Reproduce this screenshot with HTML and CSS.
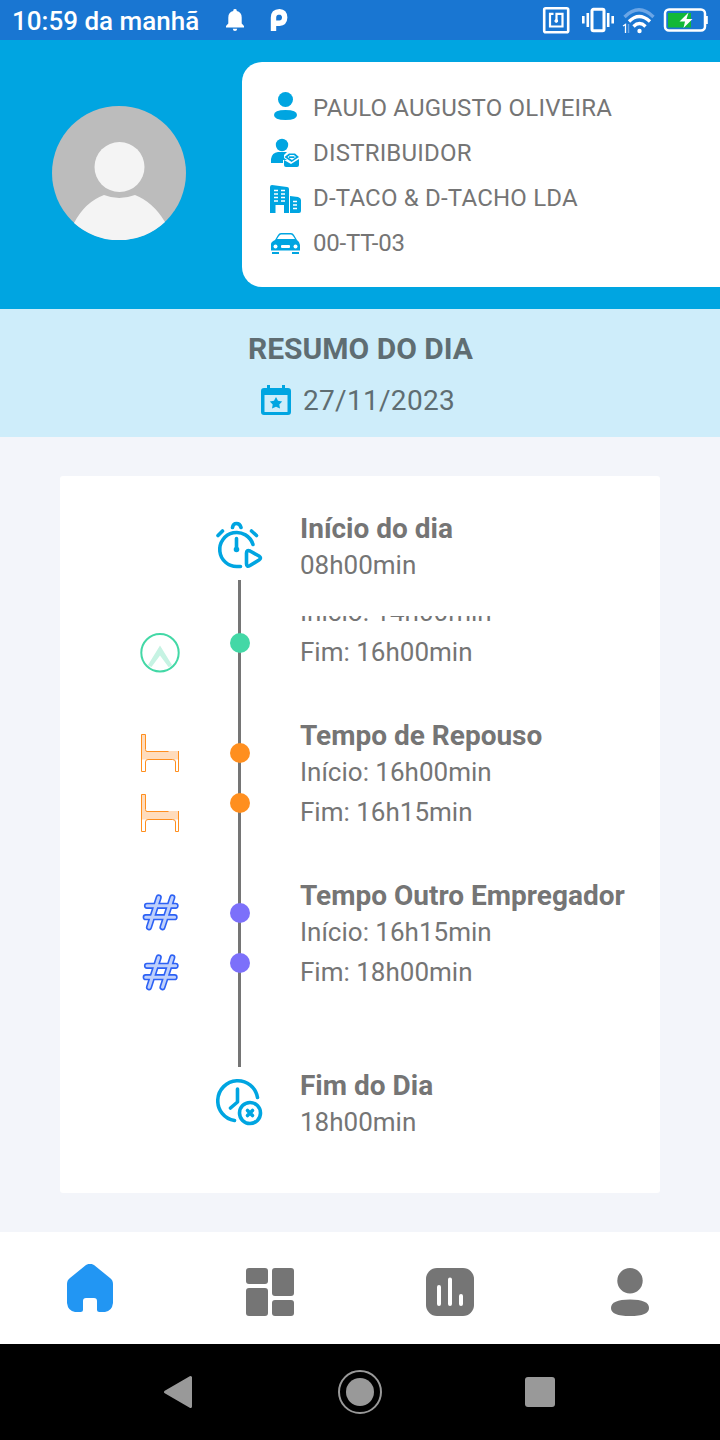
FILE: index.html
```
<!DOCTYPE html>
<html lang="pt">
<head>
  <meta charset="UTF-8">
  <title>Resumo do dia</title>
  <meta name="viewport" content="width=720, initial-scale=1.0">
  <link rel="stylesheet" href="styles.css">
</head>
<body>
  <svg width="0" height="0" class="defs">
    <symbol id="bed" viewBox="0 0 40 40">
      <path d="M1 1.500H5V18H38.500V26.500H1Z" fill="#ffdcbc"/>
      <path d="M28.500 18.500H7Q5.500 18.500 5.500 16.500V1.500H1.500V38.500H5.500V29Q5.500 26.500 8 26.500H32.500Q35.500 26.500 35.500 29V38.500H38.500V18" fill="none" stroke="#ff8f1f"/>
    </symbol>
    <symbol id="hash" viewBox="0 0 40 40">
      <g fill="none" stroke-linecap="round" stroke-linejoin="round">
        <path d="M18.700 4.500L9 34.200M32.300 4.500L22.500 34.200M7 12.800H35.600M5.700 24.200H34.600" stroke="#2d62f5" stroke-width="6.200"/>
        <path d="M18.700 4.500L9 34.200M32.300 4.500L22.500 34.200M7 12.800H35.600M5.700 24.200H34.600" stroke="#bfd0fb" stroke-width="3"/>
      </g>
    </symbol>
  </svg>

  <div class="status-bar">
    <span class="clock">10:59 da manhã</span>
    <svg class="bell" width="20" height="24" viewBox="0 0 20 24" fill="#fff">
      <path d="M1 19.500V18L3.300 15.500V9.500Q3.300 4.200 8.300 3V2.200Q8.300 1 10 1Q11.700 1 11.700 2.200V3Q16.700 4.200 16.700 9.500V15.500L19 18V19.500ZM7.800 20.800H12.200Q12 23 10 23Q8 23 7.800 20.800Z"/>
    </svg>
    <svg class="app-mark" width="20" height="24" viewBox="0 0 20 24">
      <path d="M4.500 23V9.500Q4.500 4 10.500 3.700Q15.500 4 15.700 9.500Q15.500 15 10.500 15.200H6" fill="none" stroke="#fff" stroke-width="5.400"/>
    </svg>
    <div class="status-right">
      <svg class="nfc" width="28" height="28" viewBox="0 0 28 28" fill="none" stroke="#fff" stroke-width="2.600">
        <rect x="2.200" y="2.200" width="24" height="24" rx="1.500"/>
        <path d="M11.500 7.800H8V20.500H20.500V7.800H14.500V14" stroke-width="2.200"/>
        <circle cx="14.300" cy="15" r="1.400" fill="#fff" stroke-width="1"/>
      </svg>
      <svg width="34" height="28" viewBox="0 0 34 28" fill="none" stroke="#fff" stroke-width="2.600">
        <rect x="11" y="3.300" width="12" height="21.500" rx="1.500" stroke-width="3"/>
        <path d="M6.800 7V21M2.300 10V17.500M27.200 7V21M31.700 10V17.500"/>
      </svg>
      <svg width="34" height="28" viewBox="0 0 34 28" fill="none" stroke="#fff" stroke-width="3.300">
        <path d="M2.500 11Q17 -3.500 31.500 11" stroke="#6ba6e6"/>
        <path d="M7 15.500Q17 5.500 28 15.500M11.500 20.500Q17.500 14.500 23.500 20.500"/>
        <circle cx="17.500" cy="25" r="2.200" fill="#fff" stroke="none"/>
        <path d="M1 20L3.500 18.500V27" stroke-width="1.300"/><path d="M6.500 18V27" stroke="#6ba6e6" stroke-width="1.500"/>
      </svg>
      <svg width="46" height="26" viewBox="0 0 46 26">
        <rect x="2" y="2.500" width="40" height="21" rx="4" fill="none" stroke="#fff" stroke-width="2.500"/>
        <rect x="42.500" y="9" width="2.300" height="8" fill="#fff"/>
        <rect x="5" y="6" width="23" height="14.500" fill="#12b838"/>
        <path d="M25.500 5.500L16.500 14.500H22L20.500 21L29.500 12H23.500Z" fill="#fff"/>
      </svg>
    </div>
  </div>

  <header class="profile">
    <svg class="avatar" width="134" height="134" viewBox="0 0 134 134">
      <circle cx="67" cy="67" r="67" fill="#bcbcbc"/>
      <circle cx="67.500" cy="61" r="25" fill="#f4f4f4"/>
      <path d="M22 117Q33 96 52 89Q67 95 83 89Q101 96 113 116A67 67 0 0 1 22 117Z" fill="#f4f4f4"/>
    </svg>
    <div class="profile-card">
      <div class="profile-row">
        <svg width="32" height="32" viewBox="0 0 32 32" fill="#00a5e1"><circle cx="15.500" cy="7.500" r="7.500"/><path d="M4 23Q4 18 15.500 18Q27 18 27 23Q27 28 15.500 28Q4 28 4 23Z"/></svg>
        <span>PAULO AUGUSTO OLIVEIRA</span>
      </div>
      <div class="profile-row">
        <svg width="32" height="30" viewBox="0 0 32 30" fill="#00a5e1"><circle cx="12" cy="7" r="6.200"/><path d="M1 25V21Q2 14.500 8 14H17L14 17V20L17 22H13V25ZM14 22L21 26L29 21V27Q29 29 27 29H16Q14 29 14 27ZM14.500 19L19 15.500H25L29 19L21.500 24Z"/><path d="M17.500 19L20 17H24L26 19L22 22Z" fill="#fff"/><path d="M19 18.300H24.500V20H19Z"/></svg>
        <span>DISTRIBUIDOR</span>
      </div>
      <div class="profile-row">
        <svg width="32" height="30" viewBox="0 0 32 30"><g transform="translate(0 2)"><path d="M0 2Q0 0 2 0L17 2Q19 2 19 4V28H14V20H5.500V28H0ZM20 11L28 12Q31 13 31 15V26Q31 28 29 28H20Z" fill="#00a5e1"/><path d="M4 5.500H8M11 5.500H15M4 9H8M11 9H15M4 12.500H8M11 12.500H15M4 16H8M11 16H15M23 16.500H27M23 20H27M23 23.500H27" stroke="#fff" stroke-width="1.500"/></g></svg>
        <span>D-TACO &amp; D-TACHO LDA</span>
      </div>
      <div class="profile-row">
        <svg width="32" height="30" viewBox="0 0 32 30"><path d="M1 22.500V16Q1 14 5 12L8 7Q9 5 11 5H21Q23 5 24 7L27 12Q30 14 30 17V22.500ZM2 24H9V26H2ZM22 24H29V26H22Z" fill="#00a5e1"/><path d="M7 11L9 8Q10 6.500 11 6.500H21Q22 6.500 23 8L25 11Z" fill="#fff"/><circle cx="5.500" cy="18.500" r="2" fill="#fff"/><circle cx="25.500" cy="18.500" r="2" fill="#fff"/><rect x="11" y="17" width="9" height="3" rx="1" fill="#fff"/></svg>
        <span class="plate">00-TT-03</span>
      </div>
    </div>
  </header>

  <section class="summary">
    <h1>RESUMO DO DIA</h1>
    <div class="summary-date">
      <svg width="30" height="30" viewBox="0 0 30 30"><path d="M3 3H6V0H9V3H21V0H24V3H27Q30 3 30 6V27Q30 30 27 30H3Q0 30 0 27V6Q0 3 3 3ZM3.500 10V27H26.500V10Z" fill="#00a5e1" fill-rule="evenodd"/><path d="M15 12L17 15.800L21.200 16.500L18.300 19.500L19 23.500L15 21.700L11 23.500L11.700 19.500L8.800 16.500L13 15.800Z" fill="#00a5e1"/></svg>
      <span>27/11/2023</span>
    </div>
  </section>

  <main class="content">
    <div class="day-card">
      <div class="edge edge-start">
        <svg width="48" height="48" viewBox="0 0 48 48" fill="none" stroke="#00a5e1" stroke-width="3.600" stroke-linecap="round" stroke-linejoin="round">
          <path d="M24.500 45.500H21A17 17 0 1 1 37 23.500M20.500 17.500V28.500"/><circle cx="20.500" cy="28.500" r="1"/>
          <path d="M16.500 6.500Q17 2.500 20.500 2.500Q24 2.500 25 6.500M2 14.500L6.500 10M35.500 10L40.500 14.500M30.500 32Q30.500 28.500 34 30L43 35Q46 37 43 39L34 44.500Q30.500 46.500 30.500 43Z"/>
        </svg>
        <div class="edge-text">
          <h2>Início do dia</h2>
          <p>08h00min</p>
        </div>
      </div>

      <div class="timeline">
        <div class="timeline-list">
          <div class="item">
            <div class="icons">
              <svg width="40" height="40"></svg>
              <svg width="40" height="40" viewBox="0 0 40 40"><path d="M20 12.500L32 32Q30 34 28.500 34L20 22.500L11.500 34Q9 33 8 32Z" fill="#c6f3e3"/><circle cx="20" cy="19.700" r="18.700" fill="none" stroke="#43d8a6" stroke-width="2"/></svg>
            </div>
            <div class="dots green"><i></i><i></i></div>
            <div class="item-text">
              <p>Início: 14h00min</p>
              <p>Fim: 16h00min</p>
            </div>
          </div>
          <div class="item">
            <div class="icons">
              <svg width="40" height="40"><use href="#bed"/></svg>
              <svg width="40" height="40"><use href="#bed"/></svg>
            </div>
            <div class="dots orange"><i></i><i></i></div>
            <div class="item-text">
              <h2>Tempo de Repouso</h2>
              <p>Início: 16h00min</p>
              <p>Fim: 16h15min</p>
            </div>
          </div>
          <div class="item">
            <div class="icons">
              <svg width="40" height="40"><use href="#hash"/></svg>
              <svg width="40" height="40"><use href="#hash"/></svg>
            </div>
            <div class="dots purple"><i></i><i></i></div>
            <div class="item-text">
              <h2>Tempo Outro Empregador</h2>
              <p>Início: 16h15min</p>
              <p>Fim: 18h00min</p>
            </div>
          </div>
        </div>
      </div>

      <div class="edge edge-end">
        <svg width="48" height="48" viewBox="0 0 48 48" fill="none" stroke="#00a5e1" stroke-width="3.600" stroke-linecap="round" stroke-linejoin="round">
          <path d="M18.500 42.500A20 20 0 1 1 41.500 19.500M21.500 11V24L14.500 30"/><circle cx="34" cy="35" r="10.500"/><path d="M31.500 32.500L36.500 37.500M36.500 32.500L31.500 37.500"/>
        </svg>
        <div class="edge-text">
          <h2>Fim do Dia</h2>
          <p>18h00min</p>
        </div>
      </div>
    </div>
  </main>

  <nav class="tabs">
    <a class="tab home">
      <svg width="48" height="48" viewBox="0 0 48 48"><path d="M20 1Q24 -1.500 28 1L44 14Q47 16 47 20V39Q46 47 39 48H33.500Q31 48 31 45.500V37Q31 34 28 34H20Q17 34 17 37V45.500Q17 48 14.500 48H9Q2 47 1 39V20Q1 16 4 14Z" fill="#2296f3"/></svg>
    </a>
    <a class="tab">
      <svg width="48" height="48" viewBox="0 0 48 48" fill="#757575"><rect width="22" height="16" rx="3"/><rect y="20" width="22" height="28" rx="3"/><rect x="26" width="22" height="28" rx="3"/><rect x="26" y="32" width="22" height="16" rx="3"/></svg>
    </a>
    <a class="tab">
      <svg width="48" height="48" viewBox="0 0 48 48"><rect width="48" height="48" rx="11" fill="#757575"/><path d="M13 19V36M24 11.500V36M35 28V36" stroke="#fff" stroke-width="4" stroke-linecap="round"/></svg>
    </a>
    <a class="tab">
      <svg width="48" height="48" viewBox="0 0 48 48" fill="#757575"><circle cx="24" cy="12.700" r="12.700"/><path d="M5 40Q5 31.500 24 31.500Q43 31.500 43 40Q43 48 24 48Q5 48 5 40Z"/></svg>
    </a>
  </nav>

  <div class="system-nav">
    <svg width="44" height="44" viewBox="0 0 44 44"><path d="M32.500 7.500V36.500L7.500 22Z" fill="#999" stroke="#999" stroke-width="3" stroke-linejoin="round"/></svg>
    <svg width="44" height="44" viewBox="0 0 44 44"><circle cx="22" cy="22" r="21" fill="none" stroke="#999" stroke-width="2"/><circle cx="22" cy="22" r="14" fill="#999"/></svg>
    <svg width="44" height="44" viewBox="0 0 44 44"><rect x="7" y="7" width="30" height="30" rx="3" fill="#999"/></svg>
  </div>
</body>
</html>
```
FILE: styles.css
```
* { box-sizing: border-box; margin: 0; padding: 0; }
body {
  width: 720px;
  height: 1440px;
  display: flex;
  flex-direction: column;
  overflow: hidden;
  background: #f3f5fa;
  color: #757575;
  font-family: Roboto, 'Liberation Sans', sans-serif;
}
svg { display: block; flex: none; }
.defs { display: none; }

.status-bar {
  height: 40px;
  flex: none;
  display: flex;
  align-items: center;
  padding: 0 11px 0 12px;
  background: #1976d2;
  color: #fff;
}
.clock { width: 213px; padding-top: 2px; font-size: 26px; font-weight: 500; line-height: 40px; white-space: nowrap; }
.app-mark { margin-left: 24px; }
.status-right { margin-left: auto; display: flex; align-items: center; gap: 7px; }
.nfc { margin-right: 4px; }

.profile {
  height: 269px;
  flex: none;
  display: flex;
  align-items: flex-start;
  padding: 22px 0 0 52px;
  background: #00a5e1;
}
.avatar { margin-top: 44px; }
.profile-card {
  flex: 1;
  height: 225px;
  margin-left: 56px;
  padding: 23px 0 0 28px;
  background: #fff;
  border-radius: 20px 0 0 20px;
}
.profile-row { height: 45px; display: flex; align-items: center; gap: 11px; font-size: 24px; font-weight: 380; letter-spacing: .2px; }
.plate { letter-spacing: -.2px; }

.summary {
  height: 128px;
  flex: none;
  padding-top: 20px;
  text-align: center;
  background: #ceedfa;
  color: #5f6d72;
}
.summary h1 { font-size: 30px; line-height: 40px; font-weight: 700; padding-left: 1px; }
.summary-date {
  display: flex; justify-content: center; align-items: center; gap: 12px;
  margin-top: 11px; padding-right: 4px; font-size: 28px; line-height: 40px;
  font-weight: 380; letter-spacing: .3px;
}
.summary-date span { padding-top: 1px; }
.summary-date svg { margin-top: -2px; }

.content { height: 795px; flex: none; padding: 39px 60px; }
.day-card { height: 717px; background: #fff; border-radius: 3px; }
h2 { font-size: 28px; line-height: 36px; font-weight: 700; white-space: nowrap; }
p { font-size: 26px; line-height: 40px; font-weight: 380; }

.edge { display: flex; padding-left: 156px; }
.edge-text { margin-left: 36px; }
.edge-start { height: 104px; padding-top: 35px; }
.edge-start svg { margin-top: 10px; }
.edge-end svg { margin-top: 11px; }
.edge-end .edge-text { padding-top: 1px; }
.edge p { line-height: 36px; }

.timeline {
  height: 487px;
  padding-top: 36px;
  background: linear-gradient(#757575, #757575) 178px 0 / 3px 100% no-repeat;
}
.timeline-list { height: 451px; overflow: hidden; }
.item { height: 160px; display: grid; grid-template-columns: 80px 80px 1fr; padding-left: 60px; }
.icons { display: flex; flex-direction: column; align-items: center; gap: 20px; padding-top: 20px; }
.dots { display: flex; flex-direction: column; align-items: center; gap: 30px; padding-top: 30px; }
.dots i { width: 20px; height: 20px; border-radius: 50%; }
.green i { background: #43d8a6; }
.orange i { background: #ff8f1f; }
.purple i { background: #7c70fa; }
.item-text { padding: 7px 0 0 20px; }
.item-text h2 { line-height: 32px; }

/* list is scrolled: the first item is partly out of view */
.item:first-child { margin-top: -63px; }
.item:first-child .item-text { padding-top: 39px; }

.tabs { height: 112px; flex: none; display: flex; background: #fff; }
.tab { flex: 1; display: flex; justify-content: center; padding-top: 36px; }
.home { padding-top: 32px; }

.system-nav {
  height: 96px;
  flex: none;
  display: flex;
  justify-content: space-between;
  align-items: center;
  padding: 0 158px;
  background: #000;
}
```
